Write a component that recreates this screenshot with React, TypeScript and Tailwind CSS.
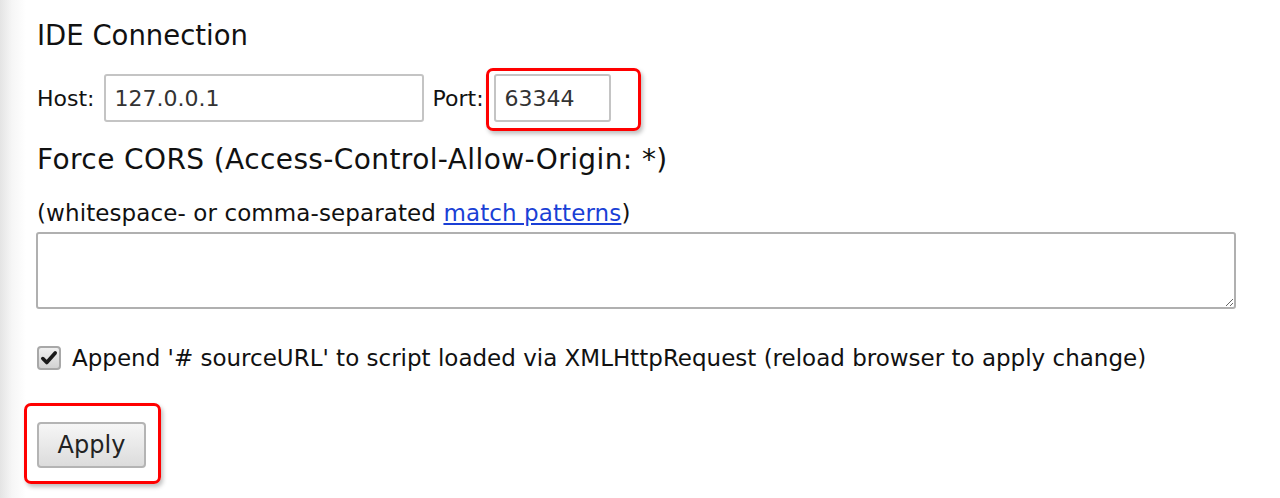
import React from "react";

const font = { fontFamily: '"DejaVu Sans", "Lucida Grande", sans-serif' };

const App: React.FC = () => {
  return (
    <div
      className="relative h-[498px] w-[1280px] overflow-hidden bg-[linear-gradient(to_right,#e4e4e4_0px,#f6f6f6_12px,#ffffff_26px)] pl-[37px] text-[#111]"
      style={font}
    >
      <h2 className="pt-[17px] text-[27.5px] leading-[36px]">IDE Connection</h2>

      <div className="mt-[21px] flex items-center text-[22px]">
        <span className="mr-[9px]">Host:</span>
        <input
          defaultValue="127.0.0.1"
          className="h-[48px] w-[320px] rounded-[3px] border-2 border-[#c4c4c4] bg-white px-[9px] text-[22px] text-[#333] outline-none"
          style={font}
        />
        <span className="ml-[9px]">Port:</span>
        <input
          defaultValue="63344"
          className="ml-[10px] h-[48px] w-[117px] rounded-[3px] border-2 border-[#c4c4c4] bg-white px-[9px] text-[22px] text-[#333] outline-none"
          style={font}
        />
      </div>

      <h2 className="mt-[20px] text-[28px] leading-[36px] tracking-[0.4px]">
        Force CORS (Access-Control-Allow-Origin: *)
      </h2>

      <p className="mt-[20px] text-[23px] leading-[30px] tracking-[0.1px]">
        (whitespace- or comma-separated{" "}
        <a href="#" className="text-[#1a3fd6] underline">
          match patterns
        </a>
        )
      </p>

      <textarea
        className="mt-[4px] block h-[77px] w-[1200px] -ml-px rounded-[3px] border-2 border-[#b0b0b0] bg-white outline-none"
        style={font}
      />

      <label className="mt-[32px] flex items-center text-[23px]">
        <span className="flex h-[24px] w-[24px] items-center justify-center rounded-[4px] border-2 border-[#a8a8a8] bg-[linear-gradient(#f0f0f0,#d2d2d2)]">
          <svg viewBox="0 0 16 16" className="h-[18px] w-[18px]">
            <path d="M2.5 8.5 L6 12 L13.5 3.5" fill="none" stroke="#1a1a1a" strokeWidth="3.2" strokeLinecap="round" strokeLinejoin="round" />
          </svg>
        </span>
        <span className="ml-[11px]">
          Append '# sourceURL' to script loaded via XMLHttpRequest (reload browser to apply change)
        </span>
      </label>

      <button
        className="mt-[46px] flex h-[46px] w-[109px] items-center justify-center rounded-[4px] border-2 border-[#b4b4b4] bg-[linear-gradient(#f6f6f6,#dcdcdc)] text-[24px] text-[#222]"
        style={font}
      >
        Apply
      </button>

      {/* red annotation boxes */}
      <div className="pointer-events-none absolute left-[486px] top-[68px] h-[63px] w-[155px] rounded-[7px] border-[3px] border-[#f00] shadow-[2px_3px_4px_rgba(0,0,0,0.25)]" />
      <div className="pointer-events-none absolute left-[24px] top-[403px] h-[81px] w-[137px] rounded-[7px] border-[3px] border-[#f00] shadow-[2px_3px_4px_rgba(0,0,0,0.25)]" />
    </div>
  );
};

export default App;
